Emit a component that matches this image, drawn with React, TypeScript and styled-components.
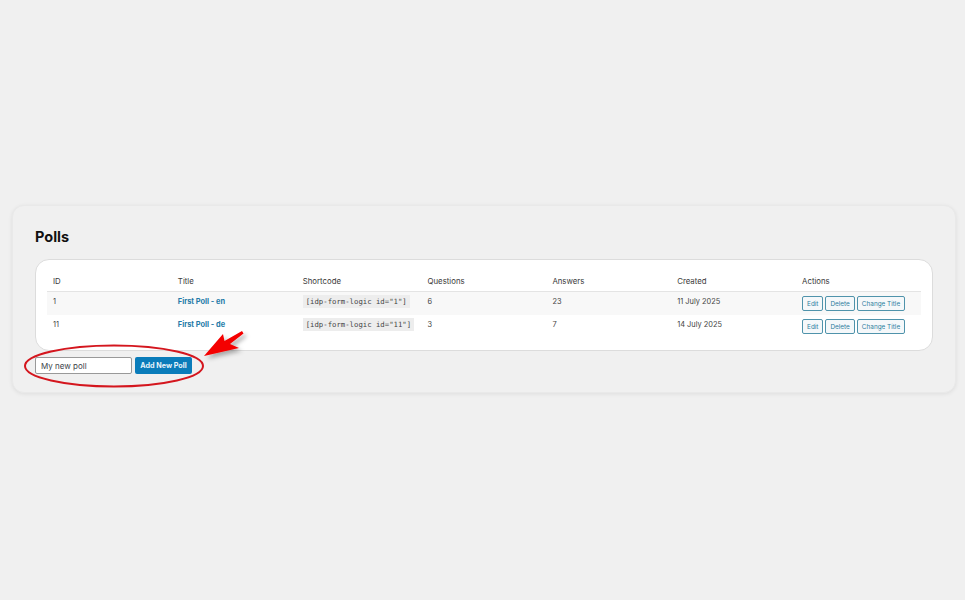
import React from 'react';
import styled, { createGlobalStyle } from 'styled-components';

const polls = [
  { id: 1, title: 'First Poll - en', shortcode: '[idp-form-logic id="1"]', questions: 6, answers: 23, created: '11 July 2025' },
  { id: 11, title: 'First Poll - de', shortcode: '[idp-form-logic id="11"]', questions: 3, answers: 7, created: '14 July 2025' },
];

const columns = ['ID', 'Title', 'Shortcode', 'Questions', 'Answers', 'Created', 'Actions'];

const App: React.FC = () => {
  return (
    <>
      <GlobalStyle />
      <Page>
        <Card>
          <Heading>Polls</Heading>
          <TablePanel>
            <Table>
              <thead>
                <tr>
                  {columns.map((col) => (
                    <HeadCell key={col}>{col}</HeadCell>
                  ))}
                </tr>
              </thead>
              <tbody>
                {polls.map((poll) => (
                  <Row key={poll.id}>
                    <Cell>{poll.id}</Cell>
                    <Cell><PollLink href="#">{poll.title}</PollLink></Cell>
                    <Cell><Code>{poll.shortcode}</Code></Cell>
                    <Cell>{poll.questions}</Cell>
                    <Cell>{poll.answers}</Cell>
                    <Cell>{poll.created}</Cell>
                    <ActionCell>
                      <Actions>
                        <SmallButton>Edit</SmallButton>
                        <SmallButton>Delete</SmallButton>
                        <SmallButton>Change Title</SmallButton>
                      </Actions>
                    </ActionCell>
                  </Row>
                ))}
              </tbody>
            </Table>
          </TablePanel>
          <AddForm>
            <TitleInput defaultValue="My new poll" />
            <AddButton>Add New Poll</AddButton>
            <Annotation width="230" height="70" viewBox="0 0 230 70">
              <defs>
                <filter id="arrowShadow" x="-30%" y="-30%" width="170%" height="170%">
                  <feDropShadow dx="3" dy="3" stdDeviation="2" floodColor="#000" floodOpacity="0.3" />
                </filter>
              </defs>
              <ellipse cx="91" cy="40" rx="89" ry="20.5" fill="none" stroke="#d4161e" strokeWidth="2" />
              <path
                d="M181 30 L200 8 L201.5 15 L219 5 L220.5 7.5 L207 18 L216 22 Z"
                fill="#f40606"
                filter="url(#arrowShadow)"
              />
            </Annotation>
          </AddForm>
        </Card>
      </Page>
    </>
  );
};

export default App;

const GlobalStyle = createGlobalStyle`
  html, body {
    margin: 0;
    padding: 0;
    background: #f0f0f0;
  }
  * {
    box-sizing: border-box;
  }
`;

const Page = styled.div`
  width: 965px;
  height: 600px;
  padding: 205px 9px 0 12px;
  background: #f0f0f0;
  font-family: Inter, "Liberation Sans", sans-serif;
  color: #3c434a;
  overflow: hidden;
`;

const Card = styled.div`
  height: 188px;
  padding: 21px 22px 0;
  background: #f0f0f0;
  border: 1px solid #e9e9e9;
  border-radius: 12px;
  box-shadow: 0 1px 4px rgba(0, 0, 0, 0.08);
`;

const Heading = styled.h1`
  margin: 0 0 13px;
  font-size: 14.5px;
  line-height: 19px;
  font-weight: 700;
  color: #111;
`;

const TablePanel = styled.div`
  height: 92px;
  padding: 11px 11px 0;
  background: #fff;
  border: 1px solid #dcdcdc;
  border-radius: 14px;
`;

const Table = styled.table`
  width: 100%;
  table-layout: fixed;
  border-collapse: collapse;
`;

const HeadCell = styled.th`
  height: 20px;
  padding: 0 6px;
  text-align: left;
  font-size: 7.8px;
  font-weight: 400;
  color: #3a3a3a;
  border-bottom: 1.5px solid #e4e4e4;
`;

const Row = styled.tr`
  height: 23.5px;
  &:nth-child(odd) {
    background: #f8f8f8;
  }
`;

const Cell = styled.td`
  padding: 0 6px 4px;
  font-size: 7.4px;
  color: #444;
  white-space: nowrap;
  vertical-align: middle;
`;

const ActionCell = styled.td`
  padding: 1px 6px 0;
  vertical-align: middle;
`;

const PollLink = styled.a`
  font-weight: 700;
  color: #1f7ba8;
  text-decoration: none;
`;

const Code = styled.code`
  padding: 2px 3px;
  background: #ededed;
  font-family: "DejaVu Sans Mono", "Liberation Mono", monospace;
  font-size: 7.3px;
  color: #444;
`;

const Actions = styled.div`
  display: flex;
  gap: 2px;
`;

const SmallButton = styled.button`
  height: 15px;
  padding: 0 4px;
  background: #f5f8fa;
  border: 1px solid #4f93ab;
  border-radius: 2px;
  font-family: Inter, "Liberation Sans", sans-serif;
  font-size: 6.4px;
  white-space: nowrap;
  color: #2f7f9f;
`;

const AddForm = styled.div`
  position: relative;
  display: flex;
  gap: 3px;
  margin-top: 6px;
`;

const TitleInput = styled.input`
  width: 97px;
  height: 17px;
  padding: 0 5px;
  background: #fff;
  border: 1px solid #999;
  border-radius: 2px;
  font-family: Inter, "Liberation Sans", sans-serif;
  font-size: 8px;
  color: #3c434a;
  outline: none;
`;

const AddButton = styled.button`
  width: 57px;
  height: 17px;
  padding: 0;
  background: #0a7cba;
  border: none;
  border-radius: 2px;
  font-family: Inter, "Liberation Sans", sans-serif;
  font-size: 7.2px;
  font-weight: 700;
  color: #e8f4fb;
`;

// hand-drawn red circle and arrow laid over the form
const Annotation = styled.svg`
  position: absolute;
  left: -12px;
  top: -31px;
  pointer-events: none;
`;
